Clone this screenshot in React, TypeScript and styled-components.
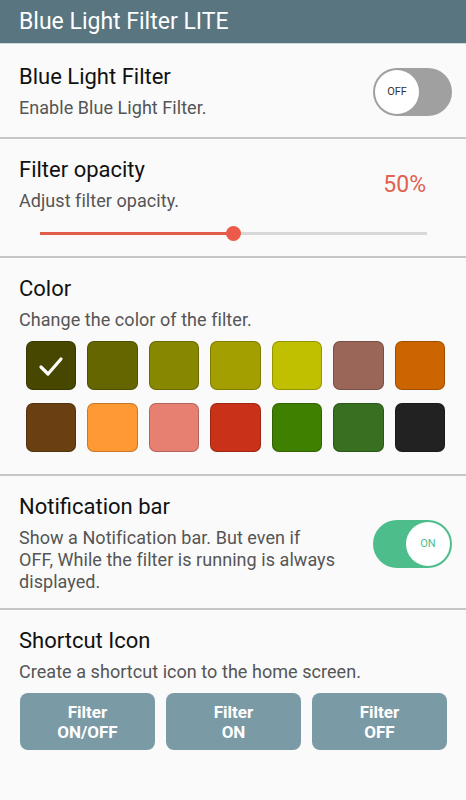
import React, { useState } from "react";
import styled, { createGlobalStyle } from "styled-components";

const GlobalStyle = createGlobalStyle`
  html, body {
    margin: 0;
    padding: 0;
    background: #fafafa;
    font-family: Roboto, "Noto Sans", sans-serif;
  }
`;

const Page = styled.div`
  width: 466px;
  min-height: 800px;
  background: #fafafa;
`;

const Header = styled.div`
  height: 43px;
  background: #587580;
  color: #ffffff;
  font-size: 23px;
  line-height: 43px;
  padding-left: 19px;
  border-bottom: 1px solid #cfd8dc;
`;

const Section = styled.div<{ $top?: number; $bottom?: number; $last?: boolean }>`
  padding: ${(p) => p.$top ?? 18}px 14px ${(p) => p.$bottom ?? 20}px 19px;
  border-bottom: ${(p) => (p.$last ? "none" : "2px solid #c6c6c6")};
`;

const Row = styled.div`
  display: flex;
  align-items: center;
  justify-content: space-between;
`;

const TextCol = styled.div<{ $max?: number }>`
  max-width: ${(p) => (p.$max ? `${p.$max}px` : "none")};
`;

const Title = styled.div`
  font-size: 22px;
  line-height: 26px;
  color: #111;
`;

const Sub = styled.div`
  margin-top: 7px;
  font-size: 18px;
  line-height: 22px;
  color: #555;
  letter-spacing: 0.05px;
`;

const Percent = styled.div`
  font-size: 23px;
  color: #e06250;
  margin-right: 26px;
`;

const Track = styled.div`
  position: relative;
  margin: 20px 25px 0 21px;
  height: 3px;
  background: #d8d8d8;
`;

const Fill = styled.div`
  height: 100%;
  background: #e25c4b;
`;

const Thumb = styled.div`
  position: absolute;
  top: -6px;
  width: 15px;
  height: 15px;
  margin-left: -7.5px;
  border-radius: 50%;
  background: #ec5a4a;
`;

const Grid = styled.div`
  display: grid;
  grid-template-columns: repeat(7, 1fr);
  column-gap: 11px;
  row-gap: 13px;
  margin: 10px 7px 0 7px;
`;

const Swatch = styled.div<{ $c: string }>`
  height: 49px;
  border-radius: 7px;
  background: ${(p) => p.$c};
  box-shadow: inset 0 0 0 1px rgba(0, 0, 0, 0.22);
  display: flex;
  align-items: center;
  justify-content: center;
`;

const SwitchTrack = styled.div<{ $on: boolean }>`
  width: 79px;
  height: 48px;
  border-radius: 24px;
  background: ${(p) => (p.$on ? "#4dbd8b" : "#a0a0a0")};
  display: flex;
  align-items: center;
  justify-content: ${(p) => (p.$on ? "flex-end" : "flex-start")};
  padding: 2px;
  box-sizing: border-box;
  flex-shrink: 0;
  cursor: pointer;
`;

const Knob = styled.div<{ $on: boolean }>`
  width: 44px;
  height: 44px;
  border-radius: 50%;
  background: #fff;
  display: flex;
  align-items: center;
  justify-content: center;
  font-size: 11px;
  color: ${(p) => (p.$on ? "#4dbd8b" : "#333")};
`;

const Buttons = styled.div`
  display: grid;
  grid-template-columns: repeat(3, 1fr);
  column-gap: 11px;
  margin: 10px 5px 0 1px;
`;

const ShortcutButton = styled.button`
  height: 57px;
  border: none;
  border-radius: 8px;
  background: #7a9aa6;
  color: #fff;
  font-family: Roboto, "Noto Sans", sans-serif;
  font-weight: 700;
  font-size: 17px;
  line-height: 20px;
  padding: 0;
`;

const colors = [
  "#474700",
  "#666600",
  "#878700",
  "#a39f00",
  "#c0c000",
  "#996658",
  "#cc6500",
  "#6a3f12",
  "#ff9933",
  "#e88072",
  "#c93218",
  "#3f8000",
  "#386f20",
  "#222222",
];

function Toggle({ on, onClick }: { on: boolean; onClick: () => void }) {
  return (
    <SwitchTrack $on={on} onClick={onClick}>
      <Knob $on={on}>{on ? "ON" : "OFF"}</Knob>
    </SwitchTrack>
  );
}

export default function App() {
  const [enabled, setEnabled] = useState(false);
  const [notify, setNotify] = useState(true);
  const [selected, setSelected] = useState(0);
  const opacity = 50;

  return (
    <Page>
      <GlobalStyle />
      <Header>Blue Light Filter LITE</Header>

      <Section $top={20} $bottom={18}>
        <Row>
          <TextCol>
            <Title>Blue Light Filter</Title>
            <Sub>Enable Blue Light Filter.</Sub>
          </TextCol>
          <Toggle on={enabled} onClick={() => setEnabled(!enabled)} />
        </Row>
      </Section>

      <Section $bottom={21}>
        <Row>
          <TextCol>
            <Title>Filter opacity</Title>
            <Sub>Adjust filter opacity.</Sub>
          </TextCol>
          <Percent>{opacity}%</Percent>
        </Row>
        <Track>
          <Fill style={{ width: `${opacity}%` }} />
          <Thumb style={{ left: `${opacity}%` }} />
        </Track>
      </Section>

      <Section $bottom={22}>
        <Title>Color</Title>
        <Sub>Change the color of the filter.</Sub>
        <Grid>
          {colors.map((c, i) => (
            <Swatch key={c} $c={c} onClick={() => setSelected(i)}>
              {selected === i && (
                <svg width="26" height="22" viewBox="0 0 26 22">
                  <polyline
                    points="3,12 10,19 23,4"
                    fill="none"
                    stroke="#fff"
                    strokeWidth="3.2"
                    strokeLinecap="round"
                    strokeLinejoin="round"
                  />
                </svg>
              )}
            </Swatch>
          ))}
        </Grid>
      </Section>

      <Section $bottom={15}>
        <Row>
          <TextCol $max={340}>
            <Title>Notification bar</Title>
            <Sub>
              Show a Notification bar. But even if
              <br />
              OFF, While the filter is running is always displayed.
            </Sub>
          </TextCol>
          <Toggle on={notify} onClick={() => setNotify(!notify)} />
        </Row>
      </Section>

      <Section $last>
        <Title>Shortcut Icon</Title>
        <Sub>Create a shortcut icon to the home screen.</Sub>
        <Buttons>
          <ShortcutButton>
            Filter
            <br />
            ON/OFF
          </ShortcutButton>
          <ShortcutButton>
            Filter
            <br />
            ON
          </ShortcutButton>
          <ShortcutButton>
            Filter
            <br />
            OFF
          </ShortcutButton>
        </Buttons>
      </Section>
    </Page>
  );
}
